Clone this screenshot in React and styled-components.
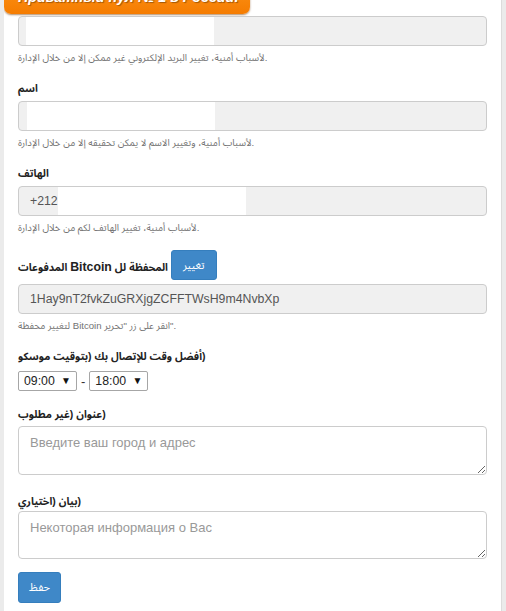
import React from 'react';
import styled, { createGlobalStyle } from 'styled-components';

const arabicStack = `'Liberation Sans', 'Noto Sans Arabic', 'DejaVu Sans Condensed', 'DejaVu Sans', sans-serif`;

const GlobalStyle = createGlobalStyle`
  body {
    margin: 0;
    background: #ebebeb;
    font-family: ${arabicStack};
  }
`;

const Panel = styled.div`
  margin: 0 4px;
  min-height: 611px;
  background: #fff;
  border-right: 1px solid #dcdcdc;
  overflow: hidden;
`;

const Banner = styled.div`
  width: 246px;
  height: 40px;
  margin-top: -26px;
  margin-bottom: 2px;
  padding: 12px 0 0 14px;
  box-sizing: border-box;
  background: linear-gradient(#ff9a1f, #f57c00);
  border-radius: 0 0 7px 7px;
  box-shadow: 0 1px 2px rgba(120, 60, 0, 0.6);
  color: #fff;
  font-family: 'Liberation Sans', Arial, sans-serif;
  font-weight: bold;
  font-style: italic;
  font-size: 14.3px;
  line-height: 22px;
  white-space: nowrap;
  text-shadow: 1px 1px 1px rgba(0, 0, 0, 0.35);
`;

const Form = styled.form`
  padding: 0 14px;
`;

const Group = styled.div`
  margin-bottom: ${(props) => props.$gap ?? 15}px;
`;

const Label = styled.div`
  font-size: 10.5px;
  font-weight: bold;
  color: #222;
  line-height: 16px;
  margin-bottom: ${(props) => props.$gap ?? 5}px;
`;

const Latin = styled.span`
  font-size: 12.3px;
`;

const Iso = styled.span`
  unicode-bidi: isolate;
`;

const LabelRow = styled.div`
  display: flex;
  align-items: center;
  gap: 3px;
  margin-bottom: 4px;

  ${Label} {
    margin-bottom: 0;
    padding-top: 3px;
  }
`;

const Field = styled.div`
  display: flex;
  align-items: stretch;
  height: 30px;
  box-sizing: border-box;
  padding: 0 11px;
  border: 1px solid #ccc;
  border-radius: 4px;
  background: #f0f0f0;
  color: #555;
  font-family: 'Liberation Sans', Arial, sans-serif;
  font-size: 12.3px;
  line-height: 28px;
  white-space: nowrap;
`;

const Mask = styled.span`
  width: 188px;
  margin-left: ${(props) => props.$offset || 0}px;
  background: #fff;
`;

const Help = styled.div`
  margin-top: 5px;
  font-size: 9.6px;
  line-height: 14px;
  color: #737373;
`;

const Button = styled.button`
  height: ${(props) => props.$h || 30}px;
  padding: 0 ${(props) => props.$pad || 11}px;
  border: 1px solid #357ebd;
  border-radius: 3px;
  background: #3f88c8;
  color: #fff;
  font-family: ${arabicStack};
  font-size: 11px;
`;

const TimeRow = styled.div`
  display: flex;
  align-items: center;
  gap: 4px;
  margin-top: 7px;
  color: #333;
  font-family: 'Liberation Sans', Arial, sans-serif;
  font-size: 13px;
`;

const SelectBox = styled.div`
  position: relative;
  width: 59px;
  height: 20px;

  select {
    appearance: none;
    width: 100%;
    height: 100%;
    box-sizing: border-box;
    padding: 0 0 0 5px;
    border: 1px solid #a6a6a6;
    border-radius: 2px;
    background: #fff;
    color: #222;
    font-family: 'Liberation Sans', Arial, sans-serif;
    font-size: 12.3px;
  }

  &::after {
    content: '▼';
    position: absolute;
    right: 6px;
    top: 4px;
    font-size: 10px;
    line-height: 12px;
    color: #111;
    pointer-events: none;
  }
`;

const TextArea = styled.textarea`
  display: block;
  width: 100%;
  height: ${(props) => props.$h}px;
  box-sizing: border-box;
  padding: 6px 11px;
  border: 1px solid #ccc;
  border-radius: 4px;
  font-family: 'Liberation Sans', Arial, sans-serif;
  font-size: 13px;
  line-height: 20px;
  color: #555;

  &::placeholder {
    color: #999;
  }
`;

const hours = ['09:00', '10:00', '12:00', '15:00', '18:00', '21:00'];

const TimeSelect = ({ value }) => (
  <SelectBox>
    <select defaultValue={value}>
      {hours.map((h) => (
        <option key={h}>{h}</option>
      ))}
    </select>
  </SelectBox>
);

export default function App() {
  return (
    <>
      <GlobalStyle />
      <Panel>
        <Banner>Приватный пул № 1 в России!</Banner>
        <Form>
          <Group>
            <Field>
              <Mask $offset={-4} />
            </Field>
            <Help>لأسباب أمنية، تغيير البريد الإلكتروني غير ممكن إلا من خلال الإدارة.</Help>
          </Group>

          <Group>
            <Label>اسم</Label>
            <Field>
              <Mask $offset={-3} />
            </Field>
            <Help>لأسباب أمنية، وتغيير الاسم لا يمكن تحقيقه إلا من خلال الإدارة.</Help>
          </Group>

          <Group>
            <Label>الهاتف</Label>
            <Field>
              +212
              <Mask />
            </Field>
            <Help>لأسباب أمنية، تغيير الهاتف لكم من خلال الإدارة.</Help>
          </Group>

          <Group>
            <LabelRow>
              <Label>
                المدفوعات <Latin>Bitcoin</Latin> المحفظة لل
              </Label>
              <Button type="button">تغيير</Button>
            </LabelRow>
            <Field>1Hay9nT2fvkZuGRXjgZCFFTWsH9m4NvbXp</Field>
            <Help>لتغيير محفظة Bitcoin انقر على زر "تحرير".</Help>
          </Group>

          <Group>
            <Label $gap={0}>
              أفضل وقت للإتصال بك (بتوقيت موسكو<Iso>)</Iso>
            </Label>
            <TimeRow>
              <TimeSelect value="09:00" />
              -
              <TimeSelect value="18:00" />
            </TimeRow>
          </Group>

          <Group $gap={18}>
            <Label $gap={4}>
              عنوان (غير مطلوب<Iso>)</Iso>
            </Label>
            <TextArea $h={49} placeholder="Введите ваш город и адрес" />
          </Group>

          <Group $gap={13}>
            <Label $gap={2}>
              بيان (اختياري<Iso>)</Iso>
            </Label>
            <TextArea $h={48} placeholder="Некоторая информация о Вас" />
          </Group>

          <Button type="submit" $h={31} $pad={10}>
            حفظ
          </Button>
        </Form>
      </Panel>
    </>
  );
}
